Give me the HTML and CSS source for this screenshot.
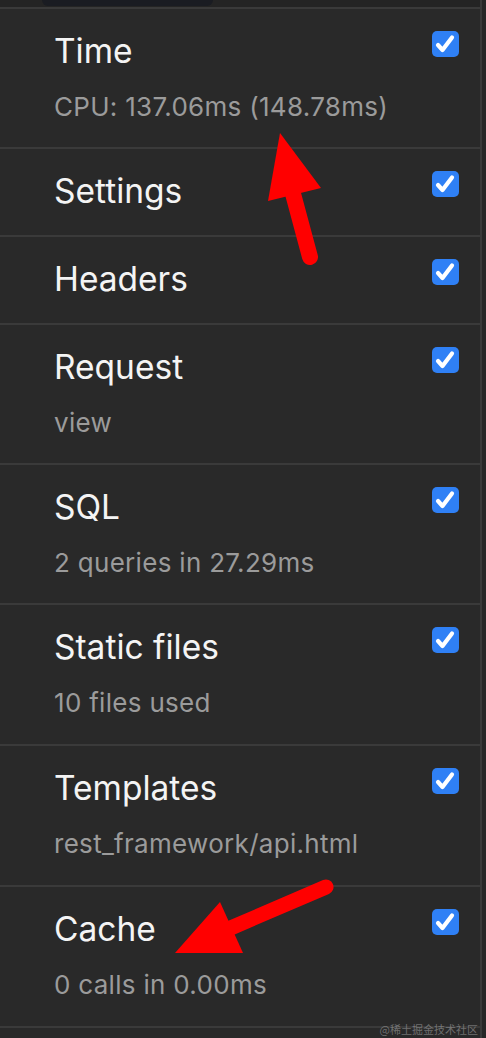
FILE: index.html
```html
<!DOCTYPE html>
<html lang="en">
<head>
<meta charset="utf-8">
<title>Debug toolbar panels</title>
<link rel="stylesheet" href="styles.css">
</head>
<body>
<div class="panel">
  <div class="topbar"><div class="pill"></div></div>
  <ul class="list">
    <li class="row">
      <div class="text"><div class="title">Time</div><div class="sub">CPU: 137.06ms (148.78ms)</div></div>
      <svg class="check" viewBox="0 0 27 26" width="27" height="26"><rect width="27" height="26" rx="5" fill="#2f80f5"/><path d="M6 14 L10.5 19 L20 6.5" fill="none" stroke="#fff" stroke-width="4.2" stroke-linecap="round" stroke-linejoin="round"/></svg>
    </li>
    <li class="row">
      <div class="text"><div class="title">Settings</div></div>
      <svg class="check" viewBox="0 0 27 26" width="27" height="26"><rect width="27" height="26" rx="5" fill="#2f80f5"/><path d="M6 14 L10.5 19 L20 6.5" fill="none" stroke="#fff" stroke-width="4.2" stroke-linecap="round" stroke-linejoin="round"/></svg>
    </li>
    <li class="row">
      <div class="text"><div class="title">Headers</div></div>
      <svg class="check" viewBox="0 0 27 26" width="27" height="26"><rect width="27" height="26" rx="5" fill="#2f80f5"/><path d="M6 14 L10.5 19 L20 6.5" fill="none" stroke="#fff" stroke-width="4.2" stroke-linecap="round" stroke-linejoin="round"/></svg>
    </li>
    <li class="row">
      <div class="text"><div class="title">Request</div><div class="sub">view</div></div>
      <svg class="check" viewBox="0 0 27 26" width="27" height="26"><rect width="27" height="26" rx="5" fill="#2f80f5"/><path d="M6 14 L10.5 19 L20 6.5" fill="none" stroke="#fff" stroke-width="4.2" stroke-linecap="round" stroke-linejoin="round"/></svg>
    </li>
    <li class="row">
      <div class="text"><div class="title">SQL</div><div class="sub">2 queries in 27.29ms</div></div>
      <svg class="check" viewBox="0 0 27 26" width="27" height="26"><rect width="27" height="26" rx="5" fill="#2f80f5"/><path d="M6 14 L10.5 19 L20 6.5" fill="none" stroke="#fff" stroke-width="4.2" stroke-linecap="round" stroke-linejoin="round"/></svg>
    </li>
    <li class="row">
      <div class="text"><div class="title">Static files</div><div class="sub">10 files used</div></div>
      <svg class="check" viewBox="0 0 27 26" width="27" height="26"><rect width="27" height="26" rx="5" fill="#2f80f5"/><path d="M6 14 L10.5 19 L20 6.5" fill="none" stroke="#fff" stroke-width="4.2" stroke-linecap="round" stroke-linejoin="round"/></svg>
    </li>
    <li class="row">
      <div class="text"><div class="title">Templates</div><div class="sub">rest_framework/api.html</div></div>
      <svg class="check" viewBox="0 0 27 26" width="27" height="26"><rect width="27" height="26" rx="5" fill="#2f80f5"/><path d="M6 14 L10.5 19 L20 6.5" fill="none" stroke="#fff" stroke-width="4.2" stroke-linecap="round" stroke-linejoin="round"/></svg>
    </li>
    <li class="row">
      <div class="text"><div class="title">Cache</div><div class="sub">0 calls in 0.00ms</div></div>
      <svg class="check" viewBox="0 0 27 26" width="27" height="26"><rect width="27" height="26" rx="5" fill="#2f80f5"/><path d="M6 14 L10.5 19 L20 6.5" fill="none" stroke="#fff" stroke-width="4.2" stroke-linecap="round" stroke-linejoin="round"/></svg>
    </li>
  </ul>
  <svg class="arrows" width="486" height="1038" viewBox="0 0 486 1038">
    <line x1="310" y1="257" x2="292" y2="190" stroke="#ff0000" stroke-width="16" stroke-linecap="round"/>
    <polygon points="280,133 321,188 268,201" fill="#ff0000"/>
    <line x1="326" y1="887" x2="226" y2="930" stroke="#ff0000" stroke-width="15" stroke-linecap="round"/>
    <polygon points="175,953 220,902 243,953" fill="#ff0000"/>
  </svg>
  <div class="watermark">@稀土掘金技术社区</div>
</div>
</body>
</html>
```

FILE: styles.css
```css
html, body {
  margin: 0;
  padding: 0;
  background: #272727;
}

.panel {
  position: relative;
  width: 480px;
  height: 1038px;
  border-right: 2px solid #3a3a3a;
  background: #292929;
  font-family: Inter, "Noto Sans", "Liberation Sans", sans-serif;
  overflow: hidden;
}

.topbar {
  height: 7px;
  background: #242424;
  padding-left: 42px;
}

.pill {
  width: 171px;
  height: 6px;
  background: #1a1c22;
  border-radius: 0 0 8px 8px;
}

.list {
  list-style: none;
  margin: 0;
  padding: 0;
  border-bottom: 2px solid #3a3a3a;
}

.row {
  display: flex;
  align-items: flex-start;
  justify-content: space-between;
  border-top: 2px solid #3a3a3a;
  padding: 22px 21px 24px 54px;
}

.row:nth-child(n+6) {
  padding-bottom: 25px;
}

.title {
  color: #f4f4f4;
  font-size: 33.5px;
  line-height: 40px;
}

.sub {
  margin-top: 20px;
  color: #9b9b9b;
  font-size: 26px;
  letter-spacing: 0.3px;
  line-height: 32px;
}

.check {
  display: block;
  flex: none;
}

.arrows {
  position: absolute;
  left: 0;
  top: 0;
  pointer-events: none;
}

.watermark {
  position: absolute;
  right: 2px;
  top: 1022px;
  font-family: "Noto Sans CJK SC", sans-serif;
  font-size: 11px;
  line-height: 14px;
  color: rgba(170, 170, 170, 0.55);
}
```
